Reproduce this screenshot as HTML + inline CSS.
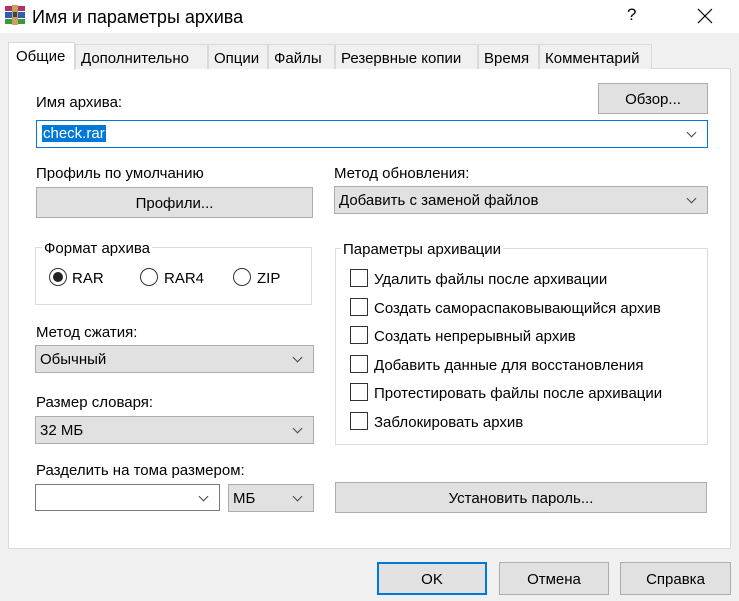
<!DOCTYPE html><html><head><meta charset="utf-8"><style>
*{box-sizing:border-box}body{margin:0;width:739px;height:601px;background:#f0f0f0;font-family:"Liberation Sans","DejaVu Sans",sans-serif;font-size:15px;color:#000;position:relative;overflow:hidden}
.a{position:absolute;white-space:nowrap}
.title{left:0;top:0;width:739px;height:33px;background:#fff}
.tab{top:44px;height:25px;border:1px solid #d9d9d9;border-bottom:none;background:#f0f0f0;padding:5px 0 0 5px}
.btn{background:#e1e1e1;border:1px solid #adadad;text-align:center;line-height:31px}
.combo{background:#e1e1e1;border:1px solid #adadad;padding-left:4px;line-height:28px}
.combo:after,.cw:after{content:"";position:absolute;right:12px;top:8px;width:6px;height:6px;border-right:1px solid #444;border-bottom:1px solid #444;transform:rotate(45deg)}
.cw{background:#fff;border:1px solid #7a7a7a}
.grp{border:1px solid #dcdcdc}
.leg{background:#fff;padding:0 2px}
.cb{width:18px;height:18px;border:1px solid #333;background:#fff}
.rd{width:18px;height:18px;border:1px solid #333;border-radius:50%;background:#fff}
</style></head><body>
<div class="a title"></div>
<svg class="a" style="left:4px;top:4px" width="22" height="22"><rect x="1" y="2" width="20" height="5" fill="#b0306a"/><rect x="1" y="8" width="20" height="6" fill="#2f5fb0"/><rect x="1" y="15" width="20" height="5" fill="#3a9a3a"/><rect x="8" y="1" width="6" height="20" fill="#c9a060"/><rect x="9" y="8" width="4" height="5" fill="#444"/></svg>
<div class="a" style="left:32px;top:7px;font-size:18px">Имя и параметры архива</div>
<div class="a" style="left:627px;top:5px;font-size:17px">?</div>
<svg class="a" style="left:697px;top:8px" width="16" height="16"><path d="M1 1L15 15M15 1L1 15" stroke="#000" stroke-width="1.2"/></svg>
<div class="a" style="left:8px;top:68px;width:723px;height:481px;background:#fff;border:1px solid #d9d9d9"></div>
<div class="a tab" style="left:75px;width:133px">Дополнительно</div>
<div class="a tab" style="left:208px;width:60px">Опции</div>
<div class="a tab" style="left:268px;width:67px">Файлы</div>
<div class="a tab" style="left:335px;width:143px">Резервные копии</div>
<div class="a tab" style="left:478px;width:61px">Время</div>
<div class="a tab" style="left:539px;width:113px">Комментарий</div>
<div class="a" style="left:8px;top:42px;width:67px;height:28px;background:#fff;border:1px solid #d9d9d9;border-bottom:none;padding:5px 0 0 7px">Общие</div>
<div class="a" style="left:36px;top:94px">Имя архива:</div>
<div class="a btn" style="left:598px;top:83px;width:110px;height:31px">Обзор...</div>
<div class="a cw" style="left:36px;top:120px;width:672px;height:28px;border-color:#0078d7"><span style="position:absolute;left:5px;top:4px;background:#0078d7;color:#fff;padding:0 1px">check.rar</span></div>
<div class="a" style="left:36px;top:165px">Профиль по умолчанию</div>
<div class="a btn" style="left:36px;top:187px;width:277px;height:31px">Профили...</div>
<div class="a" style="left:334px;top:165px">Метод обновления:</div>
<div class="a combo" style="left:334px;top:186px;width:374px;height:28px">Добавить с заменой файлов</div>
<div class="a grp" style="left:35px;top:247px;width:277px;height:58px"></div>
<div class="a leg" style="left:42px;top:240px">Формат архива</div>
<div class="a rd" style="left:49px;top:268px"><div style="width:10px;height:10px;border-radius:50%;background:#222;margin:3px"></div></div>
<div class="a" style="left:72px;top:270px">RAR</div>
<div class="a rd" style="left:140px;top:268px"></div><div class="a" style="left:164px;top:270px">RAR4</div>
<div class="a rd" style="left:233px;top:268px"></div><div class="a" style="left:257px;top:270px">ZIP</div>
<div class="a" style="left:36px;top:324px">Метод сжатия:</div>
<div class="a combo" style="left:35px;top:345px;width:279px;height:28px">Обычный</div>
<div class="a" style="left:36px;top:394px">Размер словаря:</div>
<div class="a combo" style="left:35px;top:416px;width:279px;height:28px">32 МБ</div>
<div class="a" style="left:36px;top:462px">Разделить на тома размером:</div>
<div class="a cw" style="left:35px;top:484px;width:185px;height:27px"></div>
<div class="a combo" style="left:228px;top:484px;width:86px;height:28px">МБ</div>
<div class="a grp" style="left:335px;top:248px;width:373px;height:197px"></div>
<div class="a leg" style="left:341px;top:241px">Параметры архивации</div>
<div class="a cb" style="left:350px;top:269px"></div><div class="a" style="left:374px;top:271px">Удалить файлы после архивации</div>
<div class="a cb" style="left:350px;top:298px"></div><div class="a" style="left:374px;top:300px">Создать самораспаковывающийся архив</div>
<div class="a cb" style="left:350px;top:326px"></div><div class="a" style="left:374px;top:328px">Создать непрерывный архив</div>
<div class="a cb" style="left:350px;top:355px"></div><div class="a" style="left:374px;top:357px">Добавить данные для восстановления</div>
<div class="a cb" style="left:350px;top:383px"></div><div class="a" style="left:374px;top:385px">Протестировать файлы после архивации</div>
<div class="a cb" style="left:350px;top:412px"></div><div class="a" style="left:374px;top:414px">Заблокировать архив</div>
<div class="a btn" style="left:335px;top:482px;width:372px;height:31px">Установить пароль...</div>
<div class="a btn" style="left:377px;top:562px;width:110px;height:33px;border:2px solid #0078d7;line-height:31px">OK</div>
<div class="a btn" style="left:499px;top:562px;width:110px;height:33px;line-height:33px">Отмена</div>
<div class="a btn" style="left:620px;top:562px;width:111px;height:33px;line-height:33px">Справка</div>
</body></html>
